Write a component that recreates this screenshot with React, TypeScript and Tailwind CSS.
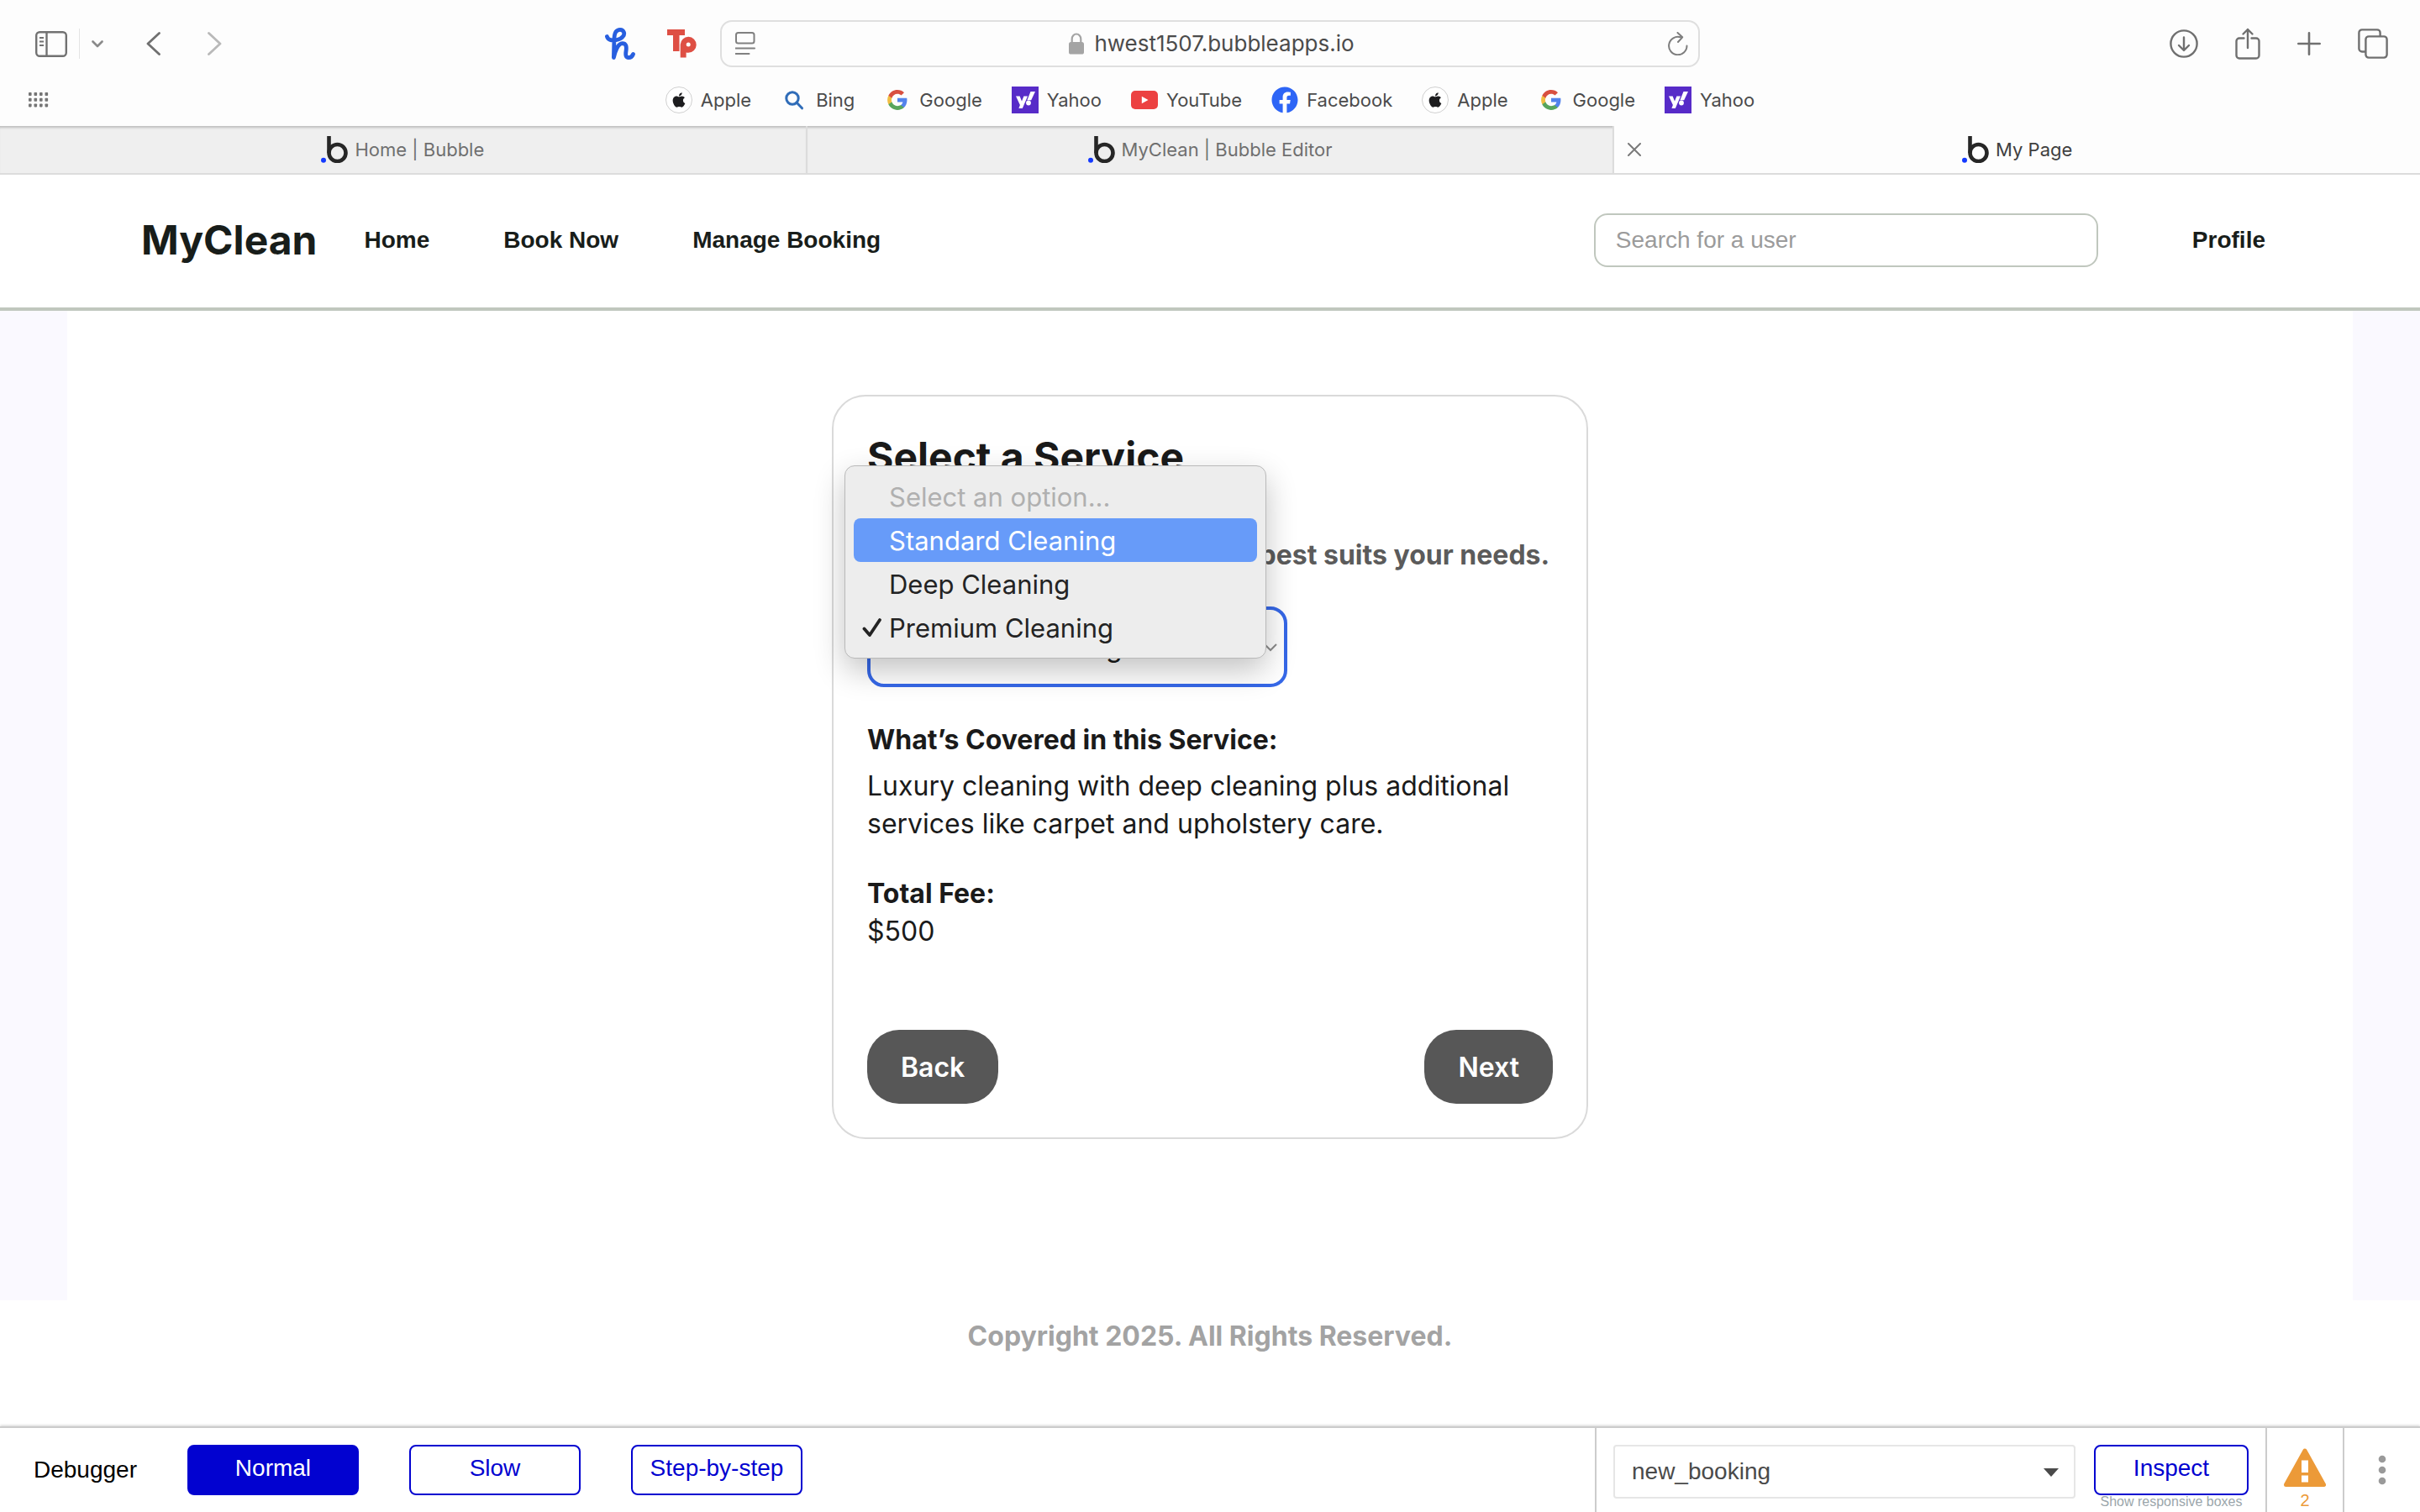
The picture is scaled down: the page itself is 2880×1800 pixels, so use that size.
import type { ReactNode } from "react";
import { FaApple, FaFacebook } from "react-icons/fa";

/* ---------- toolbar icons ---------- */

function SidebarIcon() {
  return (
    <svg width="38" height="31" viewBox="0 0 38 31" fill="none" stroke="#727272" strokeWidth="2.4">
      <rect x="1.2" y="1.2" width="35.6" height="28.6" rx="4" />
      <path d="M13.5 1v29" />
      <path d="M5 8h5M5 12.5h5M5 17h5" strokeWidth="2" />
    </svg>
  );
}

function HoneyIcon() {
  return (
    <svg width="36" height="38" viewBox="0 0 36 38" fill="none" stroke="#285fdf" strokeWidth="4.8" strokeLinecap="round" strokeLinejoin="round">
      <path d="M2.4 10.5C3.5 15 9 15.8 14 14.5C21 13 23.5 8.5 22.5 5.5C21 1.5 15.5 1.5 12.8 5C10.5 8.5 11 14 10.8 19L10.4 35.5C12 28 15.5 19 20.5 18.6C25.5 18.5 25.8 23 25 28C24.2 33 25 35.6 28 35.6C30.8 35.6 32.5 34 33.5 31.5" />
    </svg>
  );
}

function TeachersIcon() {
  return (
    <svg width="36" height="34" viewBox="0 0 36 34" fill="#de4f44">
      <path d="M0 0H21V7H14.5V26H7V7H0Z" />
      <path fillRule="evenodd" d="M15.7 33.5V18A9.5 9.5 0 1 1 25.2 27.8Q23.8 27.8 22.6 27.5V33.5ZM25.2 15.6A2.5 2.5 0 1 0 25.2 20.6A2.5 2.5 0 1 0 25.2 15.6Z" />
    </svg>
  );
}

function ReaderIcon() {
  return (
    <svg width="24" height="28" viewBox="0 0 24 28" fill="none" stroke="#808080" strokeWidth="2">
      <rect x="1" y="1" width="21.5" height="12.5" rx="2.5" />
      <path d="M0.5 19.5h22.5M0.5 26h16" strokeLinecap="round" />
    </svg>
  );
}

function LockIcon() {
  return (
    <svg width="18" height="26" viewBox="0 0 18 26">
      <path d="M3.7 12V7.5a5.3 6 0 0 1 10.6 0V12" fill="none" stroke="#a4a4a4" strokeWidth="2.2" />
      <rect y="11" width="18" height="14.5" rx="2.6" fill="#a4a4a4" />
    </svg>
  );
}

function ReloadIcon() {
  return (
    <svg width="24" height="28" viewBox="0 0 24 28" fill="none" stroke="#7d7d7d" strokeWidth="2" strokeLinecap="round" strokeLinejoin="round">
      <path d="M22.5 16.5A10.7 10.7 0 1 1 15 6.3" />
      <path d="M11.5 1l5.7 5.3-5.2 5.7" />
    </svg>
  );
}

function DownloadIcon() {
  return (
    <svg width="34" height="34" viewBox="0 0 34 34" fill="none" stroke="#707070" strokeWidth="2.4" strokeLinecap="round" strokeLinejoin="round">
      <circle cx="17" cy="17" r="15.6" />
      <path d="M17 9.5v15M11 19l6 6 6-6" />
    </svg>
  );
}

function ShareIcon() {
  return (
    <svg width="30" height="38" viewBox="0 0 30 38" fill="none" stroke="#707070" strokeWidth="2.4" strokeLinecap="round" strokeLinejoin="round">
      <path d="M10.5 12.5H5A3.5 3.5 0 0 0 1.5 16V33A3.5 3.5 0 0 0 5 36.5H25A3.5 3.5 0 0 0 28.5 33V16A3.5 3.5 0 0 0 25 12.5H19.5" />
      <path d="M15 24V2M9.5 7.5L15 2l5.5 5.5" />
    </svg>
  );
}

function PlusIcon() {
  return (
    <svg width="28" height="28" viewBox="0 0 28 28" fill="none" stroke="#707070" strokeWidth="2.6" strokeLinecap="round">
      <path d="M14 1.3v25.4M1.3 14h25.4" />
    </svg>
  );
}

function TabsIcon() {
  return (
    <svg width="36" height="36" viewBox="0 0 36 36" fill="none" stroke="#707070" strokeWidth="2.4">
      <path d="M9 27.5H5A3.6 3.6 0 0 1 1.4 24V5A3.6 3.6 0 0 1 5 1.4H23A3.6 3.6 0 0 1 26.6 5V9" />
      <rect x="9.4" y="9.4" width="25.2" height="25.2" rx="3.6" />
    </svg>
  );
}

function GridDotsIcon() {
  return (
    <svg width="24" height="18" viewBox="0 0 24 18" fill="#757575">
      {[0, 6.7, 13.4].map((y) =>
        [0, 6.5, 13, 19.5].map((x) => <rect key={`${x}-${y}`} x={x} y={y} width="3.6" height="4" rx="0.8" />),
      )}
    </svg>
  );
}

/* ---------- favicons ---------- */

function AppleFavicon() {
  return (
    <span className="flex size-8 items-center justify-center rounded-full border border-[#d0d0d0] bg-white">
      <FaApple className="size-5 text-[#1d1d1f]" />
    </span>
  );
}

function BingFavicon() {
  return (
    <svg width="32" height="32" viewBox="0 0 32 32" fill="none" stroke="#2f6cb8" strokeWidth="3">
      <circle cx="14" cy="14" r="7.2" />
      <path d="M19 19l6.5 6.8" strokeLinecap="round" />
    </svg>
  );
}

function GoogleFavicon() {
  return (
    <span className="flex size-8 items-center justify-center">
      <svg width="26" height="26" viewBox="0 0 24 24">
        <path fill="#5383ec" d="M22.56 12.25c0-.78-.07-1.53-.2-2.25H12v4.26h5.92c-.26 1.37-1.04 2.53-2.21 3.31v2.77h3.57c2.08-1.92 3.28-4.74 3.28-8.09z" />
        <path fill="#58a55c" d="M12 23c2.97 0 5.46-.98 7.28-2.66l-3.57-2.77c-.98.66-2.23 1.06-3.71 1.06-2.86 0-5.29-1.93-6.16-4.53H2.18v2.84C3.99 20.53 7.7 23 12 23z" />
        <path fill="#f1bd42" d="M5.84 14.09c-.22-.66-.35-1.36-.35-2.09s.13-1.43.35-2.09V7.07H2.18C1.43 8.55 1 10.22 1 12s.43 3.45 1.18 4.93l2.85-2.22.81-.62z" />
        <path fill="#d85040" d="M12 5.38c1.62 0 3.06.56 4.21 1.64l3.15-3.15C17.45 2.09 14.97 1 12 1 7.7 1 3.99 3.47 2.18 7.07l3.66 2.84c.87-2.6 3.3-4.53 6.16-4.53z" />
      </svg>
    </span>
  );
}

function YahooFavicon() {
  return (
    <svg width="32" height="32" viewBox="0 0 32 32">
      <rect width="32" height="32" fill="#572bc8" />
      <path d="M5 11.5H9.6L12 17.5L14.4 11.5H19L12.8 26H8.4L9.9 22Z" fill="#fff" />
      <path d="M22.5 6H28L23.2 16.2H18.4Z" fill="#fff" />
      <circle cx="20" cy="19.5" r="2.9" fill="#fff" />
    </svg>
  );
}

function YouTubeFavicon() {
  return (
    <svg width="32" height="32" viewBox="0 0 32 32">
      <rect y="5" width="32" height="22" rx="5" fill="#ec4141" />
      <path d="M12.8 11.8V20.2L20.5 16Z" fill="#fff" />
    </svg>
  );
}

function BubbleFavicon() {
  return (
    <svg width="32" height="32" viewBox="0 0 32 32" className="shrink-0">
      <circle cx="3" cy="28.8" r="3" fill="#1339ff" />
      <circle cx="19.5" cy="20" r="10" fill="none" stroke="#262626" strokeWidth="4.6" />
      <path d="M7.2 0H11.8V20H7.2Z" fill="#262626" />
    </svg>
  );
}

/* ---------- browser chrome ---------- */

function IconButton({ label, children }: { label: string; children: ReactNode }) {
  return (
    <button type="button" aria-label={label} className="flex items-center justify-center">
      {children}
    </button>
  );
}

function Toolbar() {
  return (
    <div className="grid grid-cols-[1fr_40.5%_1fr] items-center pt-6">
      <div className="flex items-center justify-between pr-[27px] pl-[42px]">
        <div className="flex items-center">
          <IconButton label="Sidebar"><SidebarIcon /></IconButton>
          <span className="mx-3.5 h-9 w-px bg-[#e4e4e4]" />
          <IconButton label="Tab groups">
            <svg width="14" height="9" viewBox="0 0 14 9" fill="none" stroke="#8a8a8a" strokeWidth="2.6" strokeLinecap="round" strokeLinejoin="round">
              <path d="M1.5 1.5L7 7l5.5-5.5" />
            </svg>
          </IconButton>
          <div className="ml-[51px] flex items-center gap-14">
            <IconButton label="Back">
              <svg width="17" height="28" viewBox="0 0 17 28" fill="none" stroke="#707070" strokeWidth="2.8" strokeLinecap="round" strokeLinejoin="round">
                <path d="M15.5 1.5L2 14l13.5 12.5" />
              </svg>
            </IconButton>
            <IconButton label="Forward">
              <svg width="17" height="28" viewBox="0 0 17 28" fill="none" stroke="#b9b9b9" strokeWidth="2.8" strokeLinecap="round" strokeLinejoin="round">
                <path d="M1.5 1.5L15 14L1.5 26.5" />
              </svg>
            </IconButton>
          </div>
        </div>
        <div className="flex items-center gap-[38px]">
          <IconButton label="Honey"><HoneyIcon /></IconButton>
          <IconButton label="Teachers"><TeachersIcon /></IconButton>
        </div>
      </div>

      <div className="flex h-14 items-center justify-between rounded-[14px] border-2 border-[#dfdfdf] bg-[#fdfdfd] pr-3 pl-4">
        <IconButton label="Reader"><ReaderIcon /></IconButton>
        <div className="flex items-center gap-3 text-[26px] leading-8 text-[#4b4b4b]">
          <LockIcon />
          hwest1507.bubbleapps.io
        </div>
        <IconButton label="Reload"><ReloadIcon /></IconButton>
      </div>

      <div className="flex items-center justify-end gap-11 pr-[38px]">
        <IconButton label="Downloads"><DownloadIcon /></IconButton>
        <IconButton label="Share"><ShareIcon /></IconButton>
        <IconButton label="New tab"><PlusIcon /></IconButton>
        <IconButton label="Tab overview"><TabsIcon /></IconButton>
      </div>
    </div>
  );
}

const bookmarks: { name: string; icon: ReactNode }[] = [
  { name: "Apple", icon: <AppleFavicon /> },
  { name: "Bing", icon: <BingFavicon /> },
  { name: "Google", icon: <GoogleFavicon /> },
  { name: "Yahoo", icon: <YahooFavicon /> },
  { name: "YouTube", icon: <YouTubeFavicon /> },
  { name: "Facebook", icon: <FaFacebook className="size-8 text-[#2d65f6]" /> },
  { name: "Apple", icon: <AppleFavicon /> },
  { name: "Google", icon: <GoogleFavicon /> },
  { name: "Yahoo", icon: <YahooFavicon /> },
];

function BookmarksBar() {
  return (
    <div className="flex h-[70px] items-center px-[34px] pt-2">
      <div className="flex flex-1">
        <IconButton label="Show all bookmarks"><GridDotsIcon /></IconButton>
      </div>
      <nav className="flex gap-[35px]">
        {bookmarks.map((b, i) => (
          <a key={i} href="#" className="flex items-center gap-2.5 text-[22px] leading-8 text-[#4b4b4b]">
            {b.icon}
            {b.name}
          </a>
        ))}
      </nav>
      <div className="flex-1" />
    </div>
  );
}

function BrowserTab({ title, active }: { title: string; active?: boolean }) {
  return (
    <div
      className={
        active
          ? "relative flex flex-1 items-center justify-center gap-2 bg-[#fdfdfd] text-[#3f3f3f]"
          : "relative flex flex-1 items-center justify-center gap-2 border-r-2 border-[#dcdcdc] bg-[#efefef] text-[#6f6f6f] shadow-[inset_0_4px_3px_-2px_#bdbdbd]"
      }
    >
      {active && (
        <button type="button" aria-label="Close tab" className="absolute left-4">
          <svg width="16" height="16" viewBox="0 0 16 16" stroke="#7a7a7a" strokeWidth="2" strokeLinecap="round">
            <path d="M1 1l14 14M15 1L1 15" />
          </svg>
        </button>
      )}
      <BubbleFavicon />
      <span className="text-[22px] leading-8">{title}</span>
    </div>
  );
}

/* ---------- site ---------- */

function SiteHeader() {
  const link = "font-['Liberation_Sans',sans-serif] text-[28px] leading-8 font-bold";
  return (
    <header className="flex h-[162px] items-center justify-between border-b-4 border-[#c0c7be] bg-white pr-[184px] pb-0.5 pl-[168px] text-[#181d1a]">
      <div className="flex items-center gap-14">
        <h1 className="text-5xl font-bold">MyClean</h1>
        <nav className="flex items-center gap-[88px]">
          <a href="#" className={link}>Home</a>
          <a href="#" className={link}>Book Now</a>
          <a href="#" className={link}>Manage Booking</a>
        </nav>
      </div>
      <div className="flex items-center gap-28">
        <input
          type="search"
          aria-label="Search for a user"
          placeholder="Search for a user"
          className="h-16 w-[600px] rounded-2xl border-2 border-[#c0c7be] bg-white px-6 font-['Liberation_Sans',sans-serif] text-[28px] placeholder:text-[#9b9b9b]"
        />
        <a href="#" className={link}>Profile</a>
      </div>
    </header>
  );
}

const services = ["Standard Cleaning", "Deep Cleaning", "Premium Cleaning"];

function ServiceMenu() {
  const row = "relative flex h-[52px] items-center rounded-lg pl-[42px]";
  return (
    <ul
      role="listbox"
      aria-label="Service"
      className="absolute -top-[168px] -left-[27px] w-[502px] rounded-xl border border-[#b9b9b9] bg-[#ededed] p-2.5 text-[31px] text-[#232323] shadow-[0_14px_36px_rgba(0,0,0,0.24)]"
    >
      <li role="option" aria-disabled="true" aria-selected="false" className={`${row} text-[#b0b0b0]`}>Select an option...</li>
      {services.map((name, i) => (
        <li
          key={name}
          role="option"
          aria-selected={i === 2}
          className={i === 0 ? `${row} bg-[#679bf9] text-white` : row}
        >
          {i === 2 && (
            <svg className="absolute left-2.5" width="24" height="24" viewBox="0 0 24 24" fill="none" stroke="#232323" strokeWidth="3.8" strokeLinecap="round" strokeLinejoin="round">
              <path d="M2.5 13.5L9 21L21 3" />
            </svg>
          )}
          {name}
        </li>
      ))}
    </ul>
  );
}

function ServiceCard() {
  const button = "h-22 rounded-[38px] bg-[#575757] px-10 text-[32px] font-semibold text-white";
  return (
    <section className="mt-[100px] w-[900px] rounded-[40px] border-2 border-[#dadada] bg-white p-10 text-[32px] leading-[45px] text-[#1a1a1a]">
      <h2 className="text-5xl leading-16 font-bold">Select a Service</h2>
      <p className="mt-[62px] font-bold whitespace-nowrap text-[#5b5b5b]">Please select the service that best suits your needs.</p>
      <div className="relative mt-[39px] w-[500px]">
        <select
          aria-label="Service type"
          defaultValue="Premium Cleaning"
          className="h-24 w-full appearance-none rounded-[20px] border-4 border-[#3668e8] bg-white pr-12 pl-6 leading-[45px]"
        >
          {services.map((s) => (
            <option key={s}>{s}</option>
          ))}
        </select>
        <svg className="absolute top-11 right-3" width="16" height="10" viewBox="0 0 16 10" fill="none" stroke="#8c8c8c" strokeWidth="2">
          <path d="M1 1l7 7 7-7" />
        </svg>
        <ServiceMenu />
      </div>
      <h3 className="mt-10 font-bold">What’s Covered in this Service:</h3>
      <p className="mt-2.5">Luxury cleaning with deep cleaning plus additional services like carpet and upholstery care.</p>
      <h3 className="mt-[38px] font-bold">Total Fee:</h3>
      <p>$500</p>
      <div className="mt-[95px] flex justify-between">
        <button type="button" className={button}>Back</button>
        <button type="button" className={button}>Next</button>
      </div>
    </section>
  );
}

/* ---------- debugger bar ---------- */

function DebuggerBar() {
  const base = "flex h-[60px] items-center justify-center rounded-lg border-2 border-[#0202d0] pb-1 leading-8";
  const outline = `${base} bg-white text-[#0202d0]`;
  return (
    <div className="flex h-[102px] border-t-2 border-[#cccccc] bg-white font-['Liberation_Sans',sans-serif] text-[28px] shadow-[0_-1px_3px_rgba(0,0,0,0.18)]">
      <div className="flex flex-1 items-center gap-[60px] pl-10 text-black">
        <span>Debugger</span>
        <button type="button" className={`${base} w-[204px] bg-[#0202d0] text-white`}>Normal</button>
        <button type="button" className={`${outline} w-[204px]`}>Slow</button>
        <button type="button" className={`${outline} w-[204px]`}>Step-by-step</button>
      </div>
      <div className="flex items-start gap-[22px] border-l-2 border-[#cccccc] px-5 pt-5">
        <div className="relative">
          <select aria-label="Element" className="h-16 w-[550px] appearance-none rounded border-2 border-[#e6e6e6] bg-white pr-14 pl-5 text-[#4a4a4a]">
            <option>new_booking</option>
          </select>
          <svg className="pointer-events-none absolute top-7 right-5" width="18" height="10" viewBox="0 0 18 10" fill="#4a4a4a">
            <path d="M0 0H18L9 10Z" />
          </svg>
        </div>
        <div className="flex flex-col items-center">
          <button type="button" className={`${outline} w-[184px]`}>Inspect</button>
          <span className="text-base leading-4 text-[#9ba6ab]">Show responsive boxes</span>
        </div>
      </div>
      <button type="button" aria-label="2 issues" className="flex w-[92px] flex-col items-center gap-1 border-l-2 border-[#cccccc] pt-6 text-xl leading-6 text-[#ec9a38]">
        <svg width="50" height="46" viewBox="0 0 50 46">
          <path d="M25 3L47.5 43.500H2.5Z" fill="#ec9a38" stroke="#ec9a38" strokeWidth="5" strokeLinejoin="round" />
          <path d="M21 14.5H29V29H21ZM21 32.5H29V40.5H21Z" fill="#fff" />
        </svg>
        2
      </button>
      <button type="button" aria-label="More" className="flex w-[92px] items-center justify-center border-l-2 border-[#cccccc]">
        <svg width="10" height="36" viewBox="0 0 10 36" fill="#9a9a9a">
          <circle cx="5" cy="5" r="4.3" />
          <circle cx="5" cy="18" r="4.3" />
          <circle cx="5" cy="31" r="4.3" />
        </svg>
      </button>
    </div>
  );
}

export default function App() {
  return (
    <div className="flex min-h-screen flex-col bg-white font-['Inter',sans-serif]">
      <div className="bg-[#fdfdfd]">
        <Toolbar />
        <BookmarksBar />
        <div className="flex h-[58px] border-b-2 border-[#dcdcdc]">
          <BrowserTab title="Home | Bubble" />
          <BrowserTab title="MyClean | Bubble Editor" />
          <BrowserTab title="My Page" active />
        </div>
      </div>
      <SiteHeader />
      <main className="flex flex-1 flex-col bg-[#faf9ff] px-20">
        <div className="flex flex-1 flex-col items-center bg-white">
          <ServiceCard />
        </div>
      </main>
      <footer className="h-[150px] pt-5 text-center text-[32px] leading-[45px] font-bold text-[#a3a3a3]">
        Copyright 2025. All Rights Reserved.
      </footer>
      <DebuggerBar />
    </div>
  );
}
